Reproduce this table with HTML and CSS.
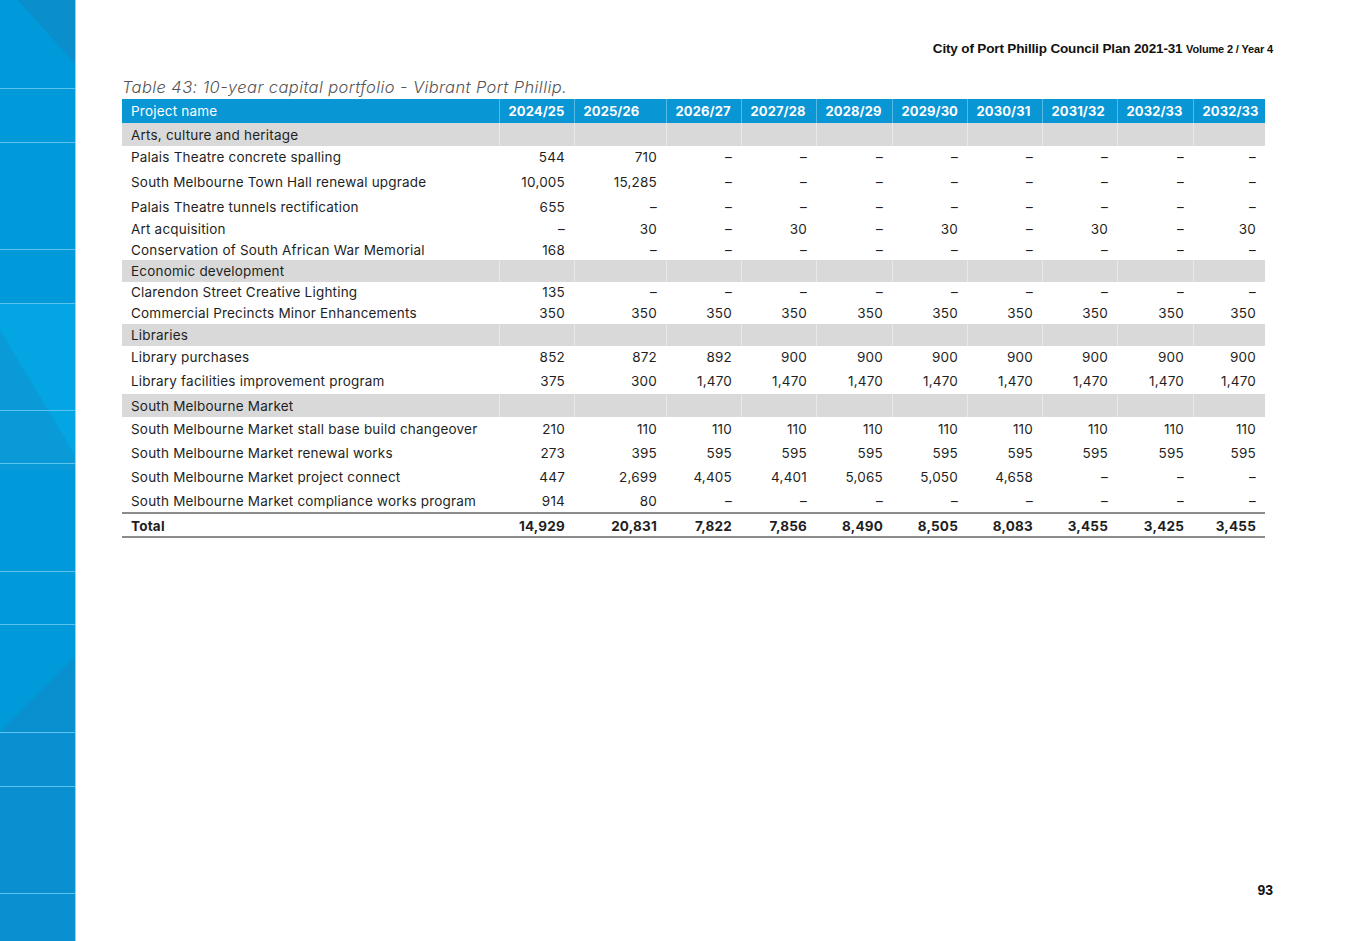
FILE: index.html
```html
<!DOCTYPE html>
<html lang="en">
<head>
<meta charset="utf-8">
<title>Table 43: 10-year capital portfolio - Vibrant Port Phillip</title>
<link rel="stylesheet" href="styles.css">
</head>
<body>
<div class="page">
  <aside class="sidebar">
    <svg class="sidebar-art" viewBox="0 0 75 941" preserveAspectRatio="none" aria-hidden="true">
      <rect x="0" y="0" width="75" height="941" fill="#0099d9"/>
      <polygon points="18,0 75,0 75,64" fill="#0a8fcc"/>
      <polygon points="0,303 75,303 75,470 0,470" fill="#03a6e3"/>
      <polygon points="0,330 75,455 75,470 0,470" fill="#0a9ad8"/>
      <polygon points="75,657 75,732 0,732" fill="#0a8fcf"/>
      <rect x="0" y="732" width="75" height="209" fill="#0a8fd1"/>
      <g fill="#5cc2ee">
        <rect x="0" y="88" width="75" height="1"/>
        <rect x="0" y="142" width="75" height="1"/>
        <rect x="0" y="249" width="75" height="1"/>
        <rect x="0" y="303" width="75" height="1"/>
        <rect x="0" y="410" width="75" height="1"/>
        <rect x="0" y="463" width="75" height="1"/>
        <rect x="0" y="571" width="75" height="1"/>
        <rect x="0" y="624" width="75" height="1"/>
        <rect x="0" y="732" width="75" height="1"/>
        <rect x="0" y="786" width="75" height="1"/>
        <rect x="0" y="893" width="75" height="1"/>
      </g>
    </svg>
  </aside>
  <main class="content">
    <header class="running-head">City of Port Phillip Council Plan 2021-31 <span class="running-sub">Volume 2 / Year 4</span></header>
    <h1 class="caption">Table 43: 10-year capital portfolio - Vibrant Port Phillip.</h1>
    <table class="capital">
      <colgroup>
        <col class="c-name">
        <col class="c-y1">
        <col class="c-y2">
        <col class="c-y">
        <col class="c-y">
        <col class="c-y76">
        <col class="c-y">
        <col class="c-y">
        <col class="c-y">
        <col class="c-y76">
        <col class="c-last">
      </colgroup>
      <thead>
        <tr class="head">
          <th class="name">Project name</th>
          <th>2024/25</th><th>2025/26</th><th>2026/27</th><th>2027/28</th><th>2028/29</th>
          <th>2029/30</th><th>2030/31</th><th>2031/32</th><th>2032/33</th><th>2032/33</th>
        </tr>
      </thead>
      <tbody>
        <tr class="cat h23"><td class="name">Arts, culture and heritage</td><td></td><td></td><td></td><td></td><td></td><td></td><td></td><td></td><td></td><td></td></tr>
        <tr class="h22"><td class="name">Palais Theatre concrete spalling</td><td>544</td><td>710</td><td>–</td><td>–</td><td>–</td><td>–</td><td>–</td><td>–</td><td>–</td><td>–</td></tr>
        <tr class="h27"><td class="name">South Melbourne Town Hall renewal upgrade</td><td>10,005</td><td>15,285</td><td>–</td><td>–</td><td>–</td><td>–</td><td>–</td><td>–</td><td>–</td><td>–</td></tr>
        <tr class="h24"><td class="name">Palais Theatre tunnels rectification</td><td>655</td><td>–</td><td>–</td><td>–</td><td>–</td><td>–</td><td>–</td><td>–</td><td>–</td><td>–</td></tr>
        <tr class="h20"><td class="name">Art acquisition</td><td>–</td><td>30</td><td>–</td><td>30</td><td>–</td><td>30</td><td>–</td><td>30</td><td>–</td><td>30</td></tr>
        <tr class="h21"><td class="name">Conservation of South African War Memorial</td><td>168</td><td>–</td><td>–</td><td>–</td><td>–</td><td>–</td><td>–</td><td>–</td><td>–</td><td>–</td></tr>
        <tr class="cat h22"><td class="name">Economic development</td><td></td><td></td><td></td><td></td><td></td><td></td><td></td><td></td><td></td><td></td></tr>
        <tr class="h20"><td class="name">Clarendon Street Creative Lighting</td><td>135</td><td>–</td><td>–</td><td>–</td><td>–</td><td>–</td><td>–</td><td>–</td><td>–</td><td>–</td></tr>
        <tr class="h22"><td class="name">Commercial Precincts Minor Enhancements</td><td>350</td><td>350</td><td>350</td><td>350</td><td>350</td><td>350</td><td>350</td><td>350</td><td>350</td><td>350</td></tr>
        <tr class="cat h22"><td class="name">Libraries</td><td></td><td></td><td></td><td></td><td></td><td></td><td></td><td></td><td></td><td></td></tr>
        <tr class="h22"><td class="name">Library purchases</td><td>852</td><td>872</td><td>892</td><td>900</td><td>900</td><td>900</td><td>900</td><td>900</td><td>900</td><td>900</td></tr>
        <tr class="h26"><td class="name">Library facilities improvement program</td><td>375</td><td>300</td><td>1,470</td><td>1,470</td><td>1,470</td><td>1,470</td><td>1,470</td><td>1,470</td><td>1,470</td><td>1,470</td></tr>
        <tr class="cat h23"><td class="name">South Melbourne Market</td><td></td><td></td><td></td><td></td><td></td><td></td><td></td><td></td><td></td><td></td></tr>
        <tr class="h24"><td class="name">South Melbourne Market stall base build changeover</td><td>210</td><td>110</td><td>110</td><td>110</td><td>110</td><td>110</td><td>110</td><td>110</td><td>110</td><td>110</td></tr>
        <tr class="h24"><td class="name">South Melbourne Market renewal works</td><td>273</td><td>395</td><td>595</td><td>595</td><td>595</td><td>595</td><td>595</td><td>595</td><td>595</td><td>595</td></tr>
        <tr class="h24"><td class="name">South Melbourne Market project connect</td><td>447</td><td>2,699</td><td>4,405</td><td>4,401</td><td>5,065</td><td>5,050</td><td>4,658</td><td>–</td><td>–</td><td>–</td></tr>
        <tr class="h24"><td class="name">South Melbourne Market compliance works program</td><td>914</td><td>80</td><td>–</td><td>–</td><td>–</td><td>–</td><td>–</td><td>–</td><td>–</td><td>–</td></tr>
      </tbody>
      <tfoot>
        <tr class="total"><td class="name">Total</td><td>14,929</td><td>20,831</td><td>7,822</td><td>7,856</td><td>8,490</td><td>8,505</td><td>8,083</td><td>3,455</td><td>3,425</td><td>3,455</td></tr>
      </tfoot>
    </table>
    <footer class="page-number">93</footer>
  </main>
</div>
</body>
</html>
```

FILE: styles.css
```css
* { box-sizing: border-box; }

html, body {
  margin: 0;
  padding: 0;
  background: #ffffff;
}

body {
  font-family: Inter, "Open Sans", "DejaVu Sans", sans-serif;
  color: #1f1f1f;
}

.page {
  display: flex;
  width: 1347px;
  height: 941px;
  overflow: hidden;
}

.sidebar {
  flex: 0 0 76px;
  height: 941px;
  border-right: 1px solid #8fd6f3;
}

.sidebar-art {
  display: block;
  width: 75px;
  height: 941px;
}

.content {
  flex: 1 1 auto;
  display: flex;
  flex-direction: column;
  padding: 40px 74px 42px 46px;
}

.running-head {
  align-self: flex-end;
  font-family: "Liberation Sans", Arial, sans-serif;
  font-weight: bold;
  font-size: 13.5px;
  letter-spacing: -0.15px;
  color: #111;
  line-height: 18px;
}

.running-sub {
  font-size: 11px;
}

.caption {
  margin: 18px 0 0 0;
  font-family: Inter, "Open Sans", sans-serif;
  font-weight: 300;
  font-style: italic;
  font-size: 16.5px;
  line-height: 22px;
  color: #555;
  letter-spacing: 0.4px;
}

.capital {
  width: 1143px;
  table-layout: fixed;
  border-collapse: collapse;
  font-size: 13.5px;
  letter-spacing: 0.2px;
  margin-top: 1px;
}

.c-name { width: 377px; }
.c-y1 { width: 75px; }
.c-y2 { width: 92px; }
.c-y { width: 75px; }
.c-y76 { width: 76px; }
.c-last { width: 72px; }

.capital th,
.capital td {
  padding: 0 9px;
  text-align: right;
  vertical-align: middle;
  white-space: nowrap;
  line-height: 16px;
}

.capital .name {
  text-align: left;
}

.head {
  height: 24px;
  background: #0996d5;
  color: #ffffff;
}

.head th {
  font-weight: 700;
  font-size: 13px;
  letter-spacing: 0.1px;
  text-align: left;
  border-left: 1px solid #55b9e6;
}

.head th.name {
  font-weight: 400;
  font-size: 13.5px;
  letter-spacing: 0.2px;
  border-left: none;
}

.cat {
  background: #d9d9d9;
}

.cat td + td {
  border-left: 1px solid #e9e9e9;
}

.h20 { height: 20px; }
.h21 { height: 21px; }
.h22 { height: 22px; }
.h23 { height: 23px; }
.h24 { height: 24px; }
.h26 { height: 26px; }
.h27 { height: 27px; }

.total {
  height: 24px;
  font-weight: 700;
  border-top: 2px solid #8c8c8c;
  border-bottom: 2px solid #8c8c8c;
}

.total td {
  padding-top: 1px;
}

.page-number {
  margin-top: auto;
  align-self: flex-end;
  font-family: "Liberation Sans", Arial, sans-serif;
  font-weight: bold;
  font-size: 14px;
  line-height: 18px;
  color: #111;
}
```
